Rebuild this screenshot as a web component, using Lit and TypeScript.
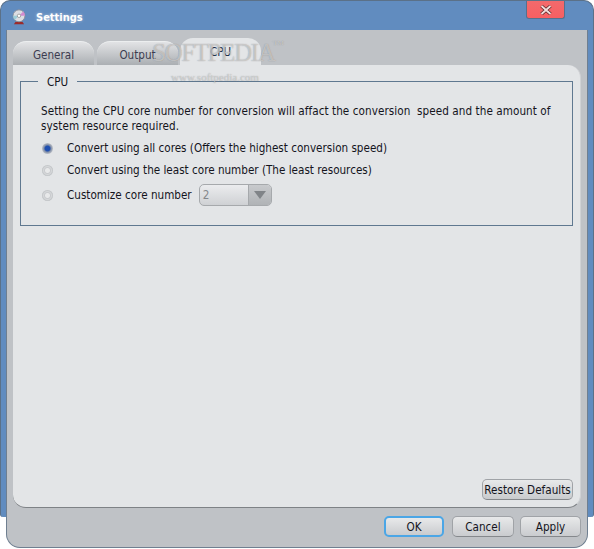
import { LitElement, html, css } from "lit";
import { customElement } from "lit/decorators.js";

@customElement("app-root")
export class AppRoot extends LitElement {
  static styles = css`
    :host {
      position: relative;
      display: block;
      width: 594px;
      height: 549px;
      overflow: hidden;
      background: #fff;
      font-family: "DejaVu Sans", sans-serif;
      font-stretch: condensed;
      font-size: 11.6px;
      color: #14141c;
    }

    .frame {
      box-sizing: border-box;
      width: 594px;
      height: 517px;
      padding: 0 5px;
      background: #618cbf;
      border: 1px solid #5b7188;
      border-bottom: 0;
      border-radius: 10px 10px 3px 3px;
    }

    .titlebar {
      display: flex;
      align-items: center;
      height: 29px;
      margin: 0 -1px;
      padding: 3px 0 0 7px;
      box-sizing: border-box;
    }

    .title {
      margin-left: 10px;
      font-size: 11px;
      font-weight: 700;
      color: #fff;
      text-shadow: 0 0 3px rgba(255, 255, 255, 0.5);
    }

    .close {
      display: flex;
      align-items: center;
      justify-content: center;
      width: 39px;
      height: 18px;
      margin: -14px 24px 0 auto;
      box-sizing: border-box;
      background: linear-gradient(#f26a6c, #f85f62);
      border: 1px solid #57708c;
      border-top: 0;
      border-radius: 0 0 3px 3px;
    }

    .body {
      box-sizing: border-box;
      height: 518px;
      width: 582px;
      padding: 8px 6px 0 6px;
      background: #bfc2c6;
      border-radius: 0 0 14px 14px;
      border-left: 1px solid #6f7f90;
      border-bottom: 1px solid #6f7f90;
      border-right: 1px solid #6f7f90;
    }

    .tabs {
      display: flex;
      align-items: flex-end;
      gap: 3px;
      height: 27px;
    }

    .tab {
      box-sizing: border-box;
      width: 81px;
      height: 24px;
      padding-top: 5px;
      text-align: center;
      line-height: 16px;
      color: #3c3c50;
      background: linear-gradient(#e2e3e5, #abafb3);
      border-radius: 13px 13px 0 0;
      border-top: 1px solid #eceeef;
    }

    .tab.active {
      height: 27px;
      padding-top: 6px;
      background: #e3e5e7;
      border-top: 0;
      color: #22304a;
      margin-left: -1px;
    }

    .panel {
      box-sizing: border-box;
      height: 443px;
      padding: 16px 7px 7px 7px;
      display: flex;
      flex-direction: column;
      background: #e3e5e7;
      border-radius: 0 13px 13px 13px;
      border-bottom: 1px solid #7e8286;
      border-right: 1px solid #d0d2d5;
    }

    .group {
      position: relative;
      box-sizing: border-box;
      height: 145px;
      padding: 22px 20px 0 20px;
      border: 1px solid #5f7890;
    }

    .legend {
      position: absolute;
      top: -8px;
      left: 17px;
      padding: 0 9px;
      background: #e3e5e7;
      line-height: 16px;
    }

    .desc {
      margin: 0;
      line-height: 15px;
      letter-spacing: 0.006em;
    }

    .option {
      display: flex;
      align-items: center;
      gap: 14px;
      height: 22px;
      padding-left: 1px;
    }

    .option.first {
      margin-top: 3px;
    }

    .option.custom {
      height: 24px;
      margin-top: 2px;
    }

    .radio {
      box-sizing: border-box;
      width: 11px;
      height: 11px;
      border-radius: 50%;
      background: radial-gradient(circle, #e8e9ea 0 2px, #c9cbce 3px, #d6d8da 4px, #bcbfc2 5.5px);
    }

    .radio.on {
      background: radial-gradient(circle, #1f4fb0 0 2.5px, #7d8ca8 3.5px, #bfc2c8 5.5px);
    }

    .select {
      display: flex;
      box-sizing: border-box;
      width: 73px;
      height: 22px;
      margin-left: -7px;
      border: 1px solid #a6a9ac;
      border-radius: 5px;
      background: linear-gradient(#ebecee, #cfd1d4);
      color: #85888c;
    }

    .value {
      flex: 1;
      padding-left: 3px;
      line-height: 20px;
    }

    .arrow {
      display: flex;
      align-items: center;
      justify-content: center;
      width: 22px;
      border-left: 1px solid #a6a9ac;
      background: linear-gradient(#c8cacd, #b0b3b6);
      border-radius: 0 4px 4px 0;
    }

    .restore-row {
      display: flex;
      justify-content: flex-end;
      margin-top: auto;
    }

    button {
      box-sizing: border-box;
      height: 21px;
      padding: 0;
      font: inherit;
      white-space: nowrap;
      color: #14141c;
      background: linear-gradient(#e8e9ea, #c9cbce);
      border: 1px solid #a0a3a7;
      border-bottom-color: #85888c;
      border-radius: 5px;
    }

    .restore {
      width: 91px;
    }

    .actions {
      display: flex;
      justify-content: flex-end;
      gap: 6px;
      margin-top: 8px;
    }

    .actions .ok {
      width: 60px;
      margin-right: 2px;
      border: 2px solid #4ba6e6;
    }

    .actions .cancel {
      width: 62px;
    }

    .actions .apply {
      width: 61px;
    }

    .mark {
      position: absolute;
      color: rgba(255, 255, 255, 0.45);
      text-shadow: 0 0 1px rgba(110, 110, 110, 0.7);
      font-family: "Liberation Serif", serif;
      font-stretch: normal;
      pointer-events: none;
      white-space: nowrap;
    }

    .mark.name {
      left: 152px;
      top: 39px;
      font-size: 25px;
      line-height: 28px;
      letter-spacing: -1.4px;
    }

    .mark.tm {
      left: 273px;
      top: 39px;
      font-size: 7px;
      line-height: 9px;
    }

    .mark.url {
      left: 171px;
      top: 70px;
      font-size: 11px;
      line-height: 14px;
    }
  `;

  render() {
    return html`
      <div class="frame">
        <div class="titlebar">
          <svg width="14" height="17" viewBox="0 0 16 20">
            <path d="M4 15 h8 l2 3 H2 z" fill="#9c2a2a" />
            <circle cx="8" cy="8" r="7" fill="#dcdde2" stroke="#8a8d96" />
            <path d="M8 8 L13 3 A7 7 0 0 1 15 8 z" fill="#d38bd0" />
            <path d="M8 8 L1 8 A7 7 0 0 0 3 13 z" fill="#9ecdd8" />
            <circle cx="8" cy="8" r="2" fill="#fff" stroke="#777" stroke-width=".7" />
          </svg>
          <span class="title">Settings</span>
          <div class="close">
            <svg width="12" height="10" viewBox="0 0 12 10">
              <path d="M1.5 1 L10.5 9 M10.5 1 L1.5 9" stroke="#5a2a2a" stroke-width="3.4" />
              <path d="M1.5 1 L10.5 9 M10.5 1 L1.5 9" stroke="#f3dede" stroke-width="1.8" />
            </svg>
          </div>
        </div>
        <div class="body">
          <div class="tabs">
            <div class="tab">General</div>
            <div class="tab">Output</div>
            <div class="tab active">CPU</div>
          </div>
          <div class="panel">
            <div class="group">
              <div class="legend">CPU</div>
              <p class="desc">
                Setting the CPU core number for conversion will affact the conversion&nbsp; speed and the amount of system resource required.
              </p>
              <div class="option first"><span class="radio on"></span>Convert using all cores (Offers the highest conversion speed)</div>
              <div class="option"><span class="radio"></span>Convert using the least core number (The least resources)</div>
              <div class="option custom">
                <span class="radio"></span>Customize core number
                <div class="select">
                  <span class="value">2</span>
                  <span class="arrow">
                    <svg width="12" height="8" viewBox="0 0 12 8"><path d="M0 0 H12 L6 8 z" fill="#808488" /></svg>
                  </span>
                </div>
              </div>
            </div>
            <div class="restore-row"><button class="restore">Restore Defaults</button></div>
          </div>
          <div class="actions">
            <button class="ok">OK</button>
            <button class="cancel">Cancel</button>
            <button class="apply">Apply</button>
          </div>
        </div>
      </div>
      <span class="mark name">SOFTPEDIA</span>
      <span class="mark tm">TM</span>
      <span class="mark url">www.softpedia.com</span>
    `;
  }
}
